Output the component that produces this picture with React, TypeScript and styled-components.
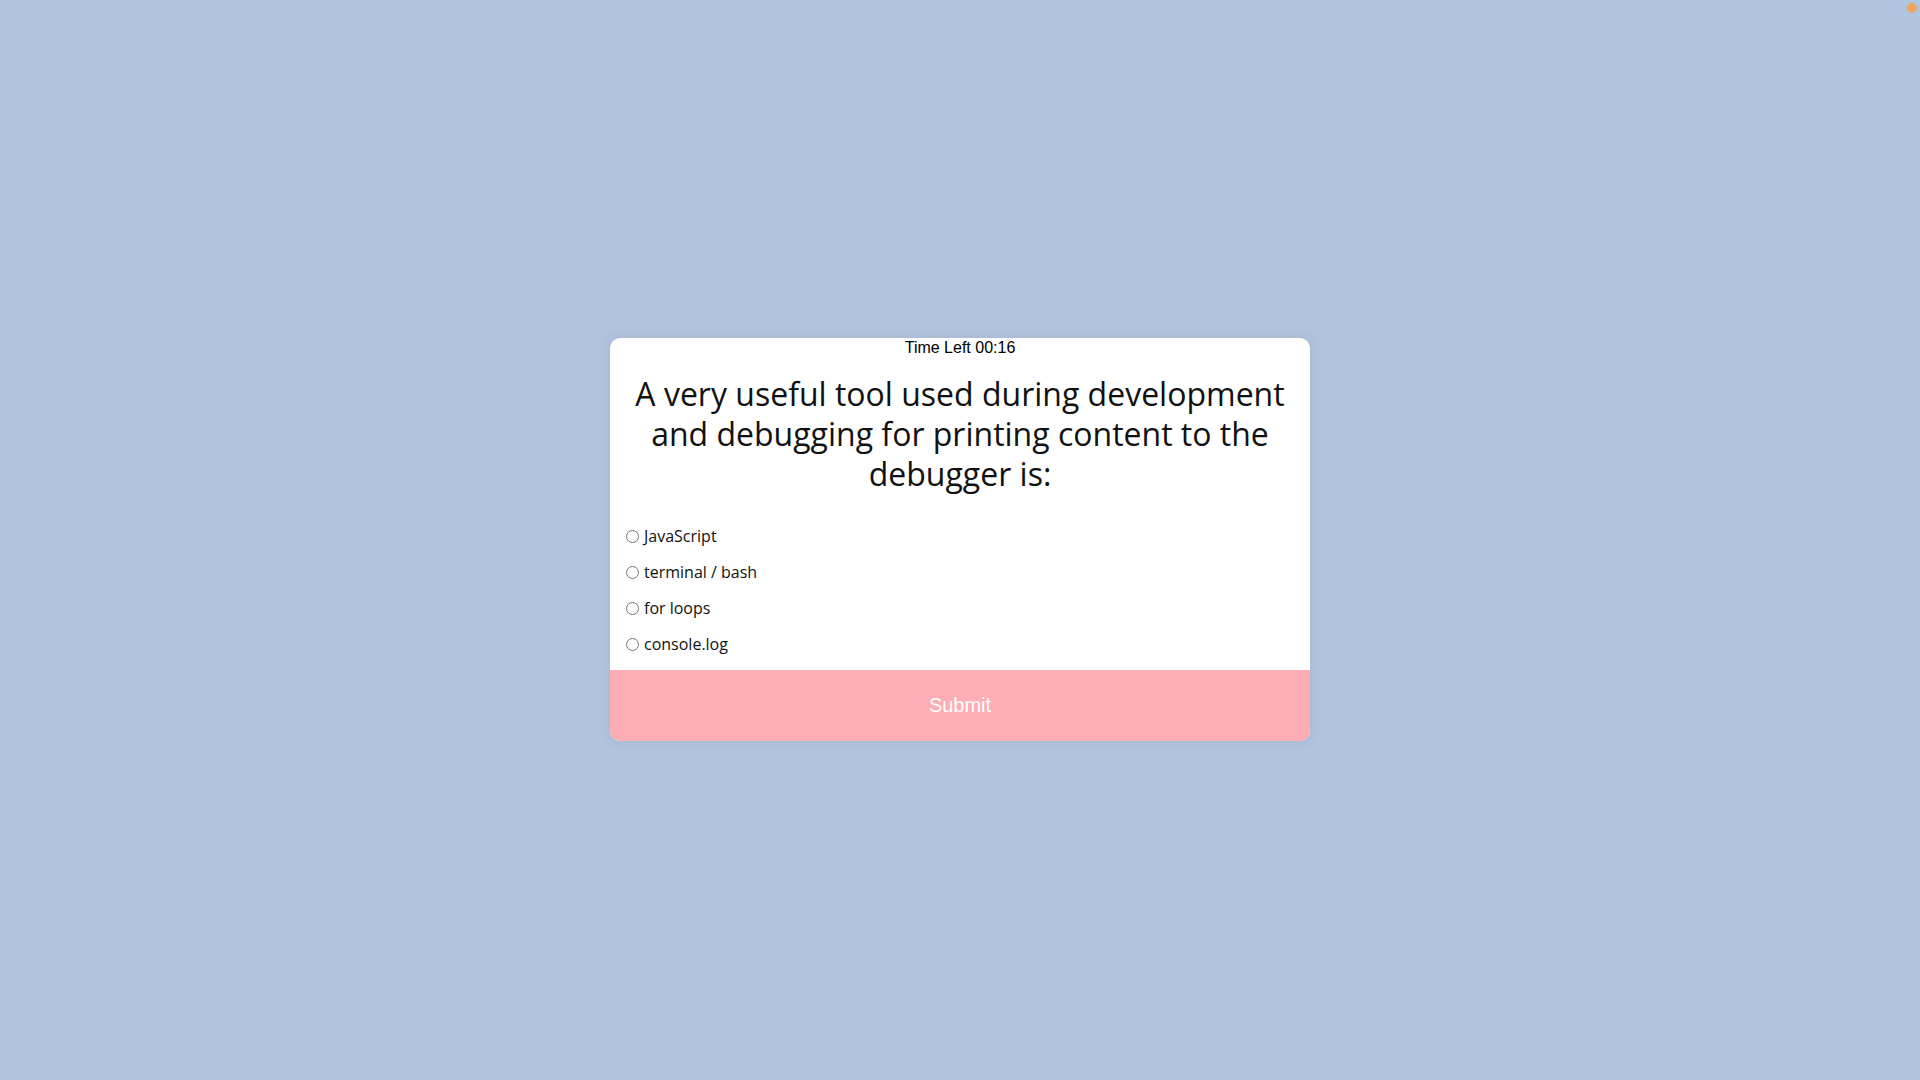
import React from "react";
import styled, { createGlobalStyle } from "styled-components";

const Global = createGlobalStyle`
  html, body { margin: 0; padding: 0; }
  body {
    background: #b0c4de;
    font-family: "Open Sans", "Liberation Sans", Arial, sans-serif;
    color: #000;
  }
`;

const Page = styled.div`
  position: relative;
  width: 100%;
  height: 1080px;
  display: flex;
  justify-content: center;
  align-items: flex-start;
  padding-top: 338px;
  box-sizing: border-box;
`;

const Dot = styled.span`
  position: absolute;
  top: 3px;
  right: 3px;
  width: 10px;
  height: 10px;
  border-radius: 50%;
  background: #f5a04a;
  opacity: 0.85;
`;

const Card = styled.div`
  width: 700px;
  background: #fff;
  border-radius: 10px;
  box-shadow: 0 0 10px 2px rgba(100, 100, 100, 0.1);
  overflow: hidden;
  display: flex;
  flex-direction: column;
`;

const Timer = styled.div`
  text-align: center;
  font-family: "Liberation Sans", Arial, sans-serif;
  font-size: 16px;
  line-height: 20px;
`;

const Question = styled.h2`
  margin: 16px 0 0;
  padding: 0 10px;
  text-align: center;
  font-size: 32px;
  line-height: 40px;
  font-weight: 400;
  color: #111;
`;

const Options = styled.ul`
  list-style: none;
  margin: 32px 0 16px;
  padding: 0 0 0 11px;
  display: flex;
  flex-direction: column;
  gap: 16px;
`;

const Option = styled.li`
  display: flex;
  align-items: center;
  font-size: 16px;
  line-height: 20px;
  color: #111;
`;

const Radio = styled.input`
  margin: 0 5px 0 5px;
  width: 13px;
  height: 13px;
`;

const Label = styled.label`
  cursor: pointer;
`;

const SubmitButton = styled.button`
  border: none;
  background: #ffadb5;
  color: #fff;
  font-family: "Liberation Sans", Arial, sans-serif;
  font-size: 20px;
  height: 71px;
  width: 100%;
  cursor: pointer;
`;

const options = ["JavaScript", "terminal / bash", "for loops", "console.log"];

export default function App() {
  return (
    <>
      <Global />
      <Page>
        <Dot />
        <Card>
          <Timer>Time Left 00:16</Timer>
          <Question>
            A very useful tool used during development
            <br />
            and debugging for printing content to the
            <br />
            debugger is:
          </Question>
          <Options>
            {options.map((o, i) => (
              <Option key={o}>
                <Radio type="radio" name="answer" id={`opt${i}`} />
                <Label htmlFor={`opt${i}`}>{o}</Label>
              </Option>
            ))}
          </Options>
          <SubmitButton>Submit</SubmitButton>
        </Card>
      </Page>
    </>
  );
}
